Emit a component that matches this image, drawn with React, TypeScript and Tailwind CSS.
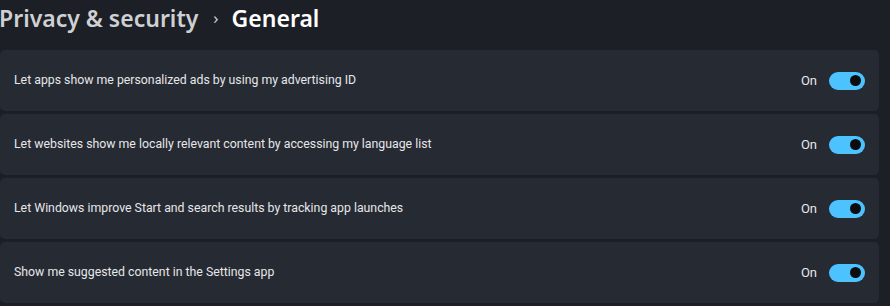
const SETTINGS = [
  "Let apps show me personalized ads by using my advertising ID",
  "Let websites show me locally relevant content by accessing my language list",
  "Let Windows improve Start and search results by tracking app launches",
  "Show me suggested content in the Settings app",
];

export default function App() {
  return (
    <main
      className="h-[306px] w-[890px] overflow-hidden bg-[#1c1f26] text-white"
      style={{ fontFamily: '"Noto Sans", "Open Sans", sans-serif' }}
    >
      <h1 className="flex h-[50px] items-start pt-[1px] text-[23px] font-semibold leading-[34px]">
        <span className="-ml-[1px] text-[#cfd0d2]">Privacy &amp; security</span>
        <span className="ml-[15px] mr-[13px] text-[17px] font-normal text-[#cfd0d2]">›</span>
        <span className="text-white">General</span>
      </h1>

      <div className="flex w-[879px] flex-col gap-[3px]">
        {SETTINGS.map((label) => (
          <Row key={label} label={label} />
        ))}
      </div>
    </main>
  );
}

function Row({ label }: { label: string }) {
  return (
    <div
      className="flex h-[61px] items-center rounded-[5px] bg-[#262a33] pl-[14px] pr-[14px] text-[12.3px] text-[#e6e7e9]"
      style={{ fontFamily: "Roboto, sans-serif" }}
    >
      <span className="flex-1">{label}</span>
      <span className="mr-[12px] text-[13px]">On</span>
      <Toggle />
    </div>
  );
}

function Toggle() {
  return (
    <span className="flex h-[18px] w-[36px] items-center justify-end rounded-full bg-[#4cc2ff] pr-[4px]">
      <span className="h-[11px] w-[11px] rounded-full bg-[#0b0d10]" />
    </span>
  );
}
